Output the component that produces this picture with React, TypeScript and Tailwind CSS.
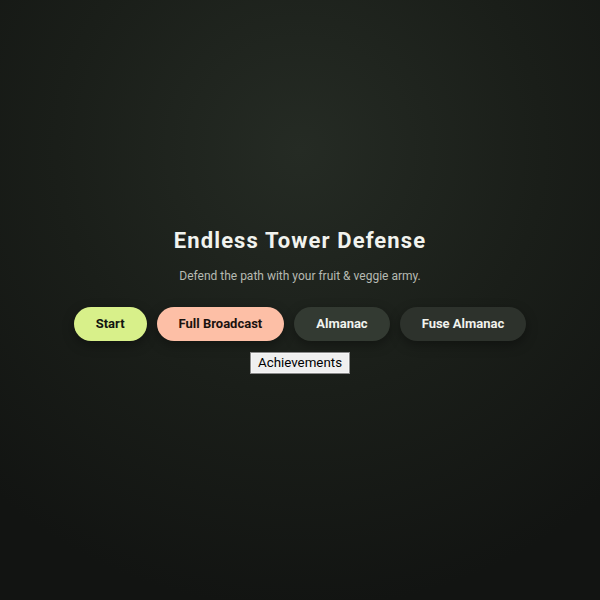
export default function App() {
  const buttons = [
    { label: 'Start', className: 'bg-[#d8f08a] text-[#111410]' },
    { label: 'Full Broadcast', className: 'bg-[#fdbfa6] text-[#1a120f]' },
    { label: 'Almanac', className: 'bg-[#333a32] text-[#f1f3ee]' },
    { label: 'Fuse Almanac', className: 'bg-[#2d322c] text-[#f1f3ee]' }
  ]

  return (
    <div className="min-h-screen w-full flex items-center justify-center bg-[radial-gradient(circle_at_50%_25%,#252b24_0%,#1a1e19_45%,#121412_85%)] font-['Roboto','Liberation_Sans',sans-serif]">
      <div className="flex flex-col items-center">
        <h1 className="text-[22px] leading-[28px] font-bold tracking-[0.05em] text-[#f1f3ee]">
          Endless Tower Defense
        </h1>
        <p className="mt-[12px] text-[12px] leading-[18px] text-[#b6bab2]">
          Defend the path with your fruit &amp; veggie army.
        </p>
        <div className="mt-[22px] flex items-center gap-2.5">
          {buttons.map((btn) => (
            <button
              key={btn.label}
              className={`px-[22px] py-[7px] rounded-full text-[13px] leading-5 font-bold shadow-[0_4px_12px_rgba(0,0,0,0.35)] cursor-pointer ${btn.className}`}
            >
              {btn.label}
            </button>
          ))}
        </div>
        <button className="mt-[11px] px-[6px] py-[1px] bg-[#efefef] border-2 border-[#f6f6f6] outline outline-1 outline-[#8a8a8a] -outline-offset-1 text-[13.33px] leading-[16px] text-black font-['Roboto','Liberation_Sans',sans-serif]">
          Achievements
        </button>
      </div>
    </div>
  )
}
